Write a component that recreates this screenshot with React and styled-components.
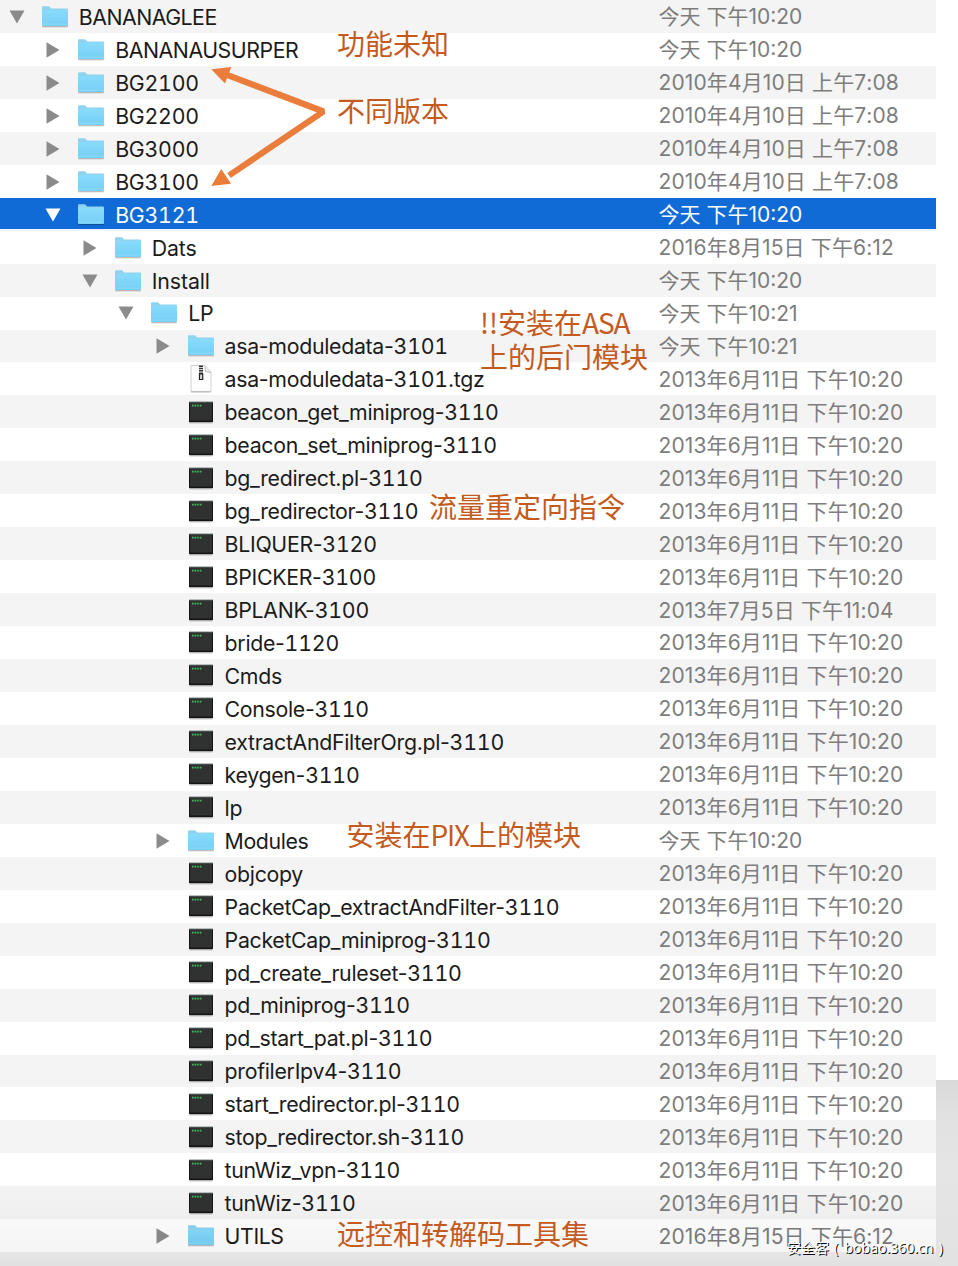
import styled, { createGlobalStyle } from "styled-components"

const GlobalStyle = createGlobalStyle`
    * {
        box-sizing: border-box;
    }
    body {
        margin: 0;
        background: #fff;
        font-family: Inter, "Noto Sans CJK SC", sans-serif;
    }
`

const Page = styled.div`
    position: relative;
    display: flex;
    width: 958px;
    height: 1266px;
    overflow: hidden;
`

const List = styled.div`
    display: flex;
    flex-direction: column;
    width: 936px;
`

const Row = styled.div`
    display: flex;
    flex: none;
    align-items: center;
    height: 32.96px;
    padding-top: 0.8px;
    padding-left: ${({ $depth }) => 8 + $depth * 36.45}px;
    background: ${({ $shade }) => ($shade ? "#f4f4f4" : "#fff")};
    color: #1b1b1b;

    ${({ $selected }) => $selected && `
        background: linear-gradient(#116bd6 31px, #f2f6fc 31px);
        color: #fff;
    `}
`

const Toggle = styled.span`
    display: flex;
    flex: none;
    justify-content: center;
    width: 18px;
    margin-right: 15px;
    color: ${({ $selected }) => ($selected ? "#fff" : "#8b8b8b")};
`

const IconCell = styled.span`
    display: flex;
    flex: none;
    justify-content: center;
    width: 28px;
    margin-right: 9.8px;
`

const Name = styled.span`
    flex: 1;
    min-width: 0;
    font-size: 21.3px;
    line-height: 32px;
    letter-spacing: ${({ $track }) => $track}px;
    white-space: nowrap;
`

const Digits = styled.span`
    letter-spacing: -0.2px;
    font-variant-numeric: tabular-nums;
`

const DateCell = styled.span`
    flex: none;
    width: 277.5px;
    padding-top: 1px;
    font-size: 21px;
    font-kerning: none;
    line-height: 32px;
    letter-spacing: ${({ $full }) => ($full ? 0.13 : 0)}px;
    white-space: nowrap;
    color: ${({ $selected }) => ($selected ? "#fff" : "#7d7d7d")};
`

const Side = styled.div`
    display: flex;
    flex-direction: column;
    justify-content: flex-end;
    width: 22px;
`

const SideShadow = styled.div`
    height: 186px;
    background: linear-gradient(#d9d9d9, #e1e1e1 35px, #e5e5e5 90px, #e2e2e2);
`

const BottomShade = styled.div`
    position: absolute;
    left: 0;
    bottom: 0;
    width: 936px;
    height: 86px;
    background: linear-gradient(rgba(0, 0, 0, 0), rgba(0, 0, 0, 0.04) 72px, #e6e6e6 72px, #e1e1e1);
`

const Note = styled.div`
    position: absolute;
    left: ${({ $x }) => $x}px;
    top: ${({ $y }) => $y}px;
    font-family: "Noto Sans CJK SC", sans-serif;
    font-weight: 400;
    font-size: 28px;
    line-height: 34px;
    color: #c55a1e;
    white-space: nowrap;
`

const Latin = styled.span`
    letter-spacing: -1.2px;
`

const Arrows = styled.svg`
    position: absolute;
    left: 205px;
    top: 60px;
`

const Watermark = styled.div`
    position: absolute;
    left: 787px;
    bottom: 8px;
    display: flex;
    font-family: "Noto Sans", "Noto Sans CJK SC", sans-serif;
    font-size: 14px;
    line-height: 20px;
    color: #fff;
    text-shadow: 1px 1px 0 #000;
`

const Paren = styled.span`
    width: 15.5px;
    padding-left: 5px;
`

const Triangle = ({ open }) => (
    open
        ? <svg width="16" height="14" viewBox="0 0 16 14"><path d="M.5.5h15L8 13.5z" fill="currentColor" /></svg>
        : <svg width="14" height="16" viewBox="0 0 14 16"><path d="M.5.3v15.4L13.5 8z" fill="currentColor" /></svg>
)

const Folder = () => (
    <svg width="28" height="24" viewBox="0 0 28 24">
        <defs>
            <linearGradient id="folder" x1="0" y1="0" x2="0" y2="1">
                <stop offset="0" stopColor="#88dbfb" />
                <stop offset="1" stopColor="#76cff6" />
            </linearGradient>
        </defs>
        <path d="M1.2 21.5h25.6" stroke="#000" strokeOpacity=".25" strokeWidth="1.6" />
        <path d="M1 20V2.4Q1 1.2 2.2 1.2H8l2.2 2.2h15.6q1.2 0 1.2 1.2V20z" fill="#8fd3ef" />
        <path d="M1 5h26v15.2q0 .8-.8.8H1.8q-.8 0-.8-.8z" fill="url(#folder)" />
        <path d="M1.3 19.2h25.4" stroke="#95e0fc" strokeWidth=".7" />
    </svg>
)

const Zip = () => (
    <svg width="24" height="30" viewBox="0 0 24 30">
        <path d="M2 1.500h14l6 6.500V27.500H2z" fill="#fff" stroke="#d0d0d0" />
        <path d="M16 2l.5 5.500 5.500 1" fill="#eee" stroke="#bdbdbd" />
        <path d="M2 28h20" stroke="#aaa" strokeWidth=".8" />
        <path d="M12 1.500v10" stroke="#333" strokeWidth="4" strokeDasharray="1.500 .8" />
        <path d="M10.500 10h3.200v5.500h-3.200z" fill="#ddd" stroke="#222" strokeWidth="1.200" />
    </svg>
)

const Exec = () => (
    <svg width="26" height="23" viewBox="0 0 26 23">
        <path d="M1.500 21.600h23" stroke="#000" strokeOpacity=".3" strokeWidth="1.500" />
        <path d="M1 1h24v20H1z" fill="#151515" />
        <path d="M1 .9h24" stroke="#8e9b9c" />
        <path d="M2 2h22v17.500H2z" fill="#303231" />
        <path d="M4 4.600h10" stroke="#42b75c" strokeWidth="1.600" strokeDasharray="1.700 .9" />
    </svg>
)

const icons = { folder: Folder, zip: Zip, exec: Exec }

const JUNE = "2013年6月11日 下午10:20"
const APRIL = "2010年4月10日 上午7:08"
const TODAY = "今天 下午10:20"

const rows = [
    { name: "BANANAGLEE", depth: 0, open: true, date: TODAY, track: -0.5 },
    { name: "BANANAUSURPER", depth: 1, date: TODAY, track: -0.45 },
    { name: "BG2100", depth: 1, date: APRIL },
    { name: "BG2200", depth: 1, date: APRIL },
    { name: "BG3000", depth: 1, date: APRIL },
    { name: "BG3100", depth: 1, date: APRIL },
    { name: "BG3121", depth: 1, open: true, selected: true, date: TODAY },
    { name: "Dats", depth: 2, date: "2016年8月15日 下午6:12", track: -0.1 },
    { name: "Install", depth: 2, open: true, date: TODAY, track: -0.1 },
    { name: "LP", depth: 3, open: true, date: "今天 下午10:21" },
    { name: "asa-moduledata-3101", depth: 4, date: "今天 下午10:21" },
    { name: "asa-moduledata-3101.tgz", depth: 4, icon: "zip", date: JUNE },
    { name: "beacon_get_miniprog-3110", depth: 4, icon: "exec", date: JUNE },
    { name: "beacon_set_miniprog-3110", depth: 4, icon: "exec", date: JUNE },
    { name: "bg_redirect.pl-3110", depth: 4, icon: "exec", date: JUNE },
    { name: "bg_redirector-3110", depth: 4, icon: "exec", date: JUNE },
    { name: "BLIQUER-3120", depth: 4, icon: "exec", date: JUNE },
    { name: "BPICKER-3100", depth: 4, icon: "exec", date: JUNE },
    { name: "BPLANK-3100", depth: 4, icon: "exec", date: "2013年7月5日 下午11:04" },
    { name: "bride-1120", depth: 4, icon: "exec", date: JUNE },
    { name: "Cmds", depth: 4, icon: "exec", date: JUNE },
    { name: "Console-3110", depth: 4, icon: "exec", date: JUNE },
    { name: "extractAndFilterOrg.pl-3110", depth: 4, icon: "exec", date: JUNE },
    { name: "keygen-3110", depth: 4, icon: "exec", date: JUNE },
    { name: "lp", depth: 4, icon: "exec", date: JUNE },
    { name: "Modules", depth: 4, date: TODAY, track: -0.4 },
    { name: "objcopy", depth: 4, icon: "exec", date: JUNE },
    { name: "PacketCap_extractAndFilter-3110", depth: 4, icon: "exec", date: JUNE },
    { name: "PacketCap_miniprog-3110", depth: 4, icon: "exec", date: JUNE },
    { name: "pd_create_ruleset-3110", depth: 4, icon: "exec", date: JUNE },
    { name: "pd_miniprog-3110", depth: 4, icon: "exec", date: JUNE },
    { name: "pd_start_pat.pl-3110", depth: 4, icon: "exec", date: JUNE },
    { name: "profilerIpv4-3110", depth: 4, icon: "exec", date: JUNE },
    { name: "start_redirector.pl-3110", depth: 4, icon: "exec", date: JUNE },
    { name: "stop_redirector.sh-3110", depth: 4, icon: "exec", date: JUNE },
    { name: "tunWiz_vpn-3110", depth: 4, icon: "exec", date: JUNE },
    { name: "tunWiz-3110", depth: 4, icon: "exec", date: JUNE },
    { name: "UTILS", depth: 4, date: "2016年8月15日 下午6:12", track: -0.4 },
]

const FileRow = ({ name, depth, open, selected, icon = "folder", date, shade, track = -0.3 }) => {
    const Icon = icons[icon]
    // only the version number has fixed-width digits
    const [, label, version, ext] = name.match(/^(.*?)(\d{4})?(\.tgz)?$/)
    return (
        <Row $depth={depth} $shade={shade} $selected={selected}>
            <Toggle $selected={selected}>{icon === "folder" && <Triangle open={open} />}</Toggle>
            <IconCell><Icon /></IconCell>
            <Name $track={track}>{label}{version && <Digits>{version}</Digits>}{ext}</Name>
            <DateCell $selected={selected} $full={date.startsWith("20")}>{date}</DateCell>
        </Row>
    )
}

const App = () => {
  return (
    <>
        <GlobalStyle />
        <Page>
            <List>
                {rows.map((row, i) => <FileRow key={row.name} {...row} shade={i % 2 === 0} />)}
            </List>
            <Side><SideShadow /></Side>
            <BottomShade />
            <Arrows width="125" height="132" viewBox="0 0 125 132">
                <path d="M22 14.800L118.500 51.500 24 115.500" fill="none" stroke="#eb7d3c" strokeWidth="6.200" strokeLinejoin="bevel" />
                <path d="M6.300 9.300l20-2.300-6.300 16.500zM6.300 126l10-17 9.700 14.700z" fill="#eb7d3c" />
            </Arrows>
            <Note $x={337} $y={26}>功能未知</Note>
            <Note $x={337} $y={93}>不同版本</Note>
            <Note $x={480} $y={305}>!!安装在<Latin>ASA</Latin><br />上的后门模块</Note>
            <Note $x={429} $y={489}>流量重定向指令</Note>
            <Note $x={346.5} $y={817}>安装在<Latin>PIX</Latin>上的模块</Note>
            <Note $x={337} $y={1216}>远控和转解码工具集</Note>
            <Watermark>安全客<Paren>(</Paren>bobao.360.cn<Paren>)</Paren></Watermark>
        </Page>
    </>
  )
}

export default App
